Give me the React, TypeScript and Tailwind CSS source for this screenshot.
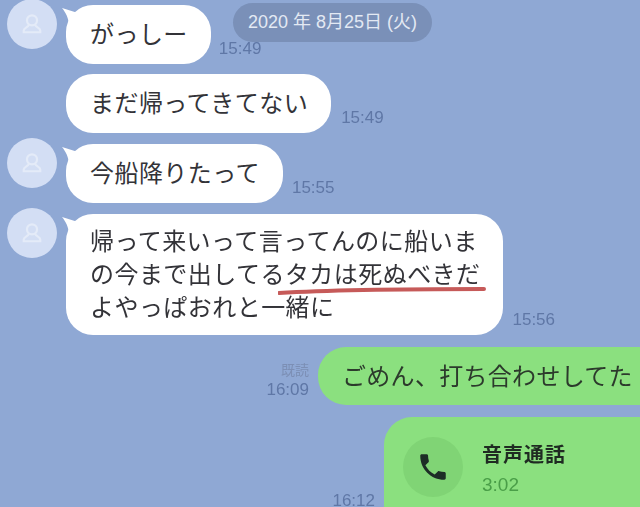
import { MdPhone } from 'react-icons/md';

const font = { fontFamily: '"Liberation Sans", "Noto Sans CJK JP", sans-serif' };
const cjk = { fontFamily: '"Noto Sans CJK JP", "Liberation Sans", sans-serif' };

function Avatar() {
  return (
    <div className="-mt-[6px] flex h-[50px] w-[50px] shrink-0 items-center justify-center rounded-full bg-[#d3def4]">
      <svg width="22" height="22" viewBox="0 0 24 24" fill="none" stroke="#e4ebf8" strokeWidth="2.4">
        <circle cx="12" cy="8" r="5.5" />
        <path d="M8.5 13 C8 15.5 3 16 3 19 V21 H21 V19 C21 16 16 15.5 15.5 13" />
      </svg>
    </div>
  );
}

function Tail() {
  return (
    <svg className="absolute -left-[4px] top-[3px]" width="16" height="16" viewBox="0 0 16 16">
      <path d="M0 0 L16 5 L7 16 C6 9 4 5 0 0 Z" fill="#ffffff" />
    </svg>
  );
}

function Time({ children }: { children: string }) {
  return <div className="mb-[6px] text-[17px] leading-[18px] text-[#5f77a6]">{children}</div>;
}

function Incoming({ time, tail, gap, className, children }: { time: string; tail?: boolean; gap: string; className?: string; children: React.ReactNode }) {
  return (
    <div className={`flex items-start pl-[7px] ${className ?? ''}`}>
      {tail ? <Avatar /> : <div className="w-[50px] shrink-0" />}
      <div className={`ml-[9px] flex items-end ${gap}`}>
        <div
          className="relative flex min-h-[59px] items-center rounded-[27px] bg-white pb-[13px] pl-[24px] pr-[23px] pt-[9px] text-[24px] leading-[33px] tracking-[0.45px] whitespace-nowrap text-[#333338]"
          style={cjk}
        >
          {tail && <Tail />}
          {children}
        </div>
        <Time>{time}</Time>
      </div>
    </div>
  );
}

export default function App() {
  return (
    <div className="h-[507px] w-[640px] overflow-hidden bg-[#8fa8d4]" style={font}>
      <div className="relative flex h-[507px] w-[640px] flex-col gap-[10px] pt-[5px] blur-[0.6px]">
        <div className="absolute left-[233px] top-[3px] flex h-[39px] w-[199px] items-center justify-center rounded-full bg-[#7a90b8] text-[18px] whitespace-nowrap text-[#e3e9f3]">
          2020 年 8月25日 (火)
        </div>

        <Incoming time="15:49" tail gap="gap-[8px]">がっしー</Incoming>
        <Incoming time="15:49" gap="gap-[10px]">まだ帰ってきてない</Incoming>
        <Incoming time="15:55" tail gap="gap-[9px]" className="mt-[1px]">今船降りたって</Incoming>
        <Incoming time="15:56" tail gap="gap-[9px]" className="mt-[1px]">
          <div>
            帰って来いって言ってんのに船いま
            <br />
            の今まで出してるタカは死ぬべきだ
            <br />
            よやっぱおれと一緒に
          </div>
          <svg className="absolute left-[212px] top-[70px]" width="208" height="12" viewBox="0 0 208 12" fill="none">
            <path d="M1 9 C50 6 150 5 206 5" stroke="#c65a59" strokeWidth="4" strokeLinecap="round" />
          </svg>
        </Incoming>

        <div className="mt-[2px] flex items-end justify-end">
          <div className="mb-[4px] mr-[9px] text-right text-[#5f77a6]">
            <div className="text-[14px] leading-[20px] text-[#7c8fb5]" style={cjk}>既読</div>
            <div className="text-[17px] leading-[22px]">16:09</div>
          </div>
          <div
            className="-mr-[30px] flex h-[58px] w-[352px] items-center rounded-[28px] bg-[#8be07f] pb-[3px] pl-[24px] text-[24px] tracking-[0.3px] whitespace-nowrap text-[#2c3a2c]"
            style={cjk}
          >
            ごめん、打ち合わせしてた
          </div>
        </div>

        <div className="mt-[2px] flex items-start justify-end">
          <div className="mr-[9px] mt-[75px] text-[17px] leading-[18px] text-[#5f77a6]">16:12</div>
          <div className="-mr-[30px] flex h-[120px] w-[286px] shrink-0 items-start rounded-[28px] bg-[#8be07f] pl-[19px] pt-[20px]">
            <div className="flex h-[60px] w-[60px] items-center justify-center rounded-full bg-[#80d475]">
              <MdPhone className="text-[#1d2e26]" size={34} />
            </div>
            <div className="ml-[19px]">
              <div className="text-[20px] font-bold leading-[34px] tracking-[1px] text-[#1f2b22]" style={cjk}>音声通話</div>
              <div className="mt-[2px] text-[19px] leading-[24px] text-[#4a9e48]">3:02</div>
            </div>
          </div>
        </div>
      </div>
    </div>
  );
}
